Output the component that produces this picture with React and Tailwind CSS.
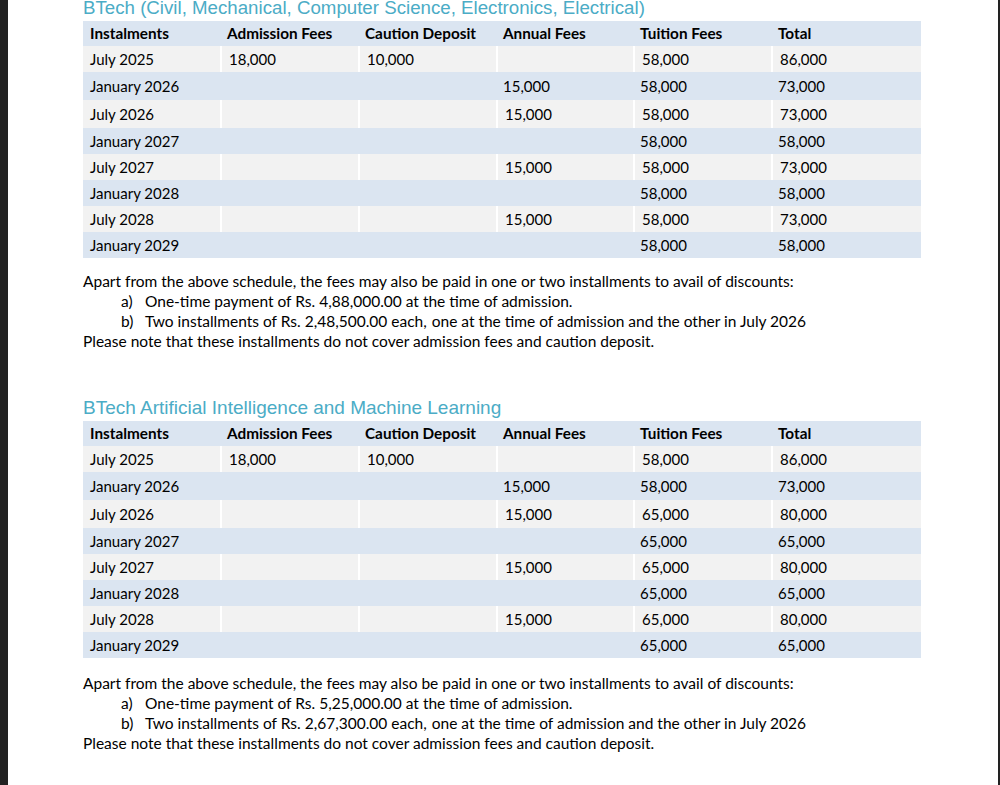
import React from "react";

const heads = ["Instalments", "Admission Fees", "Caution Deposit", "Annual Fees", "Tuition Fees", "Total"];
const heights = ["h-[26px]", "h-[28px]", "h-[28px]", "h-[26px]", "h-[26px]", "h-[26px]", "h-[26px]", "h-[26px]"];

const t1 = [
  ["July 2025", "18,000", "10,000", "", "58,000", "86,000"],
  ["January 2026", "", "", "15,000", "58,000", "73,000"],
  ["July 2026", "", "", "15,000", "58,000", "73,000"],
  ["January 2027", "", "", "", "58,000", "58,000"],
  ["July 2027", "", "", "15,000", "58,000", "73,000"],
  ["January 2028", "", "", "", "58,000", "58,000"],
  ["July 2028", "", "", "15,000", "58,000", "73,000"],
  ["January 2029", "", "", "", "58,000", "58,000"],
];
const t2 = [
  ["July 2025", "18,000", "10,000", "", "58,000", "86,000"],
  ["January 2026", "", "", "15,000", "58,000", "73,000"],
  ["July 2026", "", "", "15,000", "65,000", "80,000"],
  ["January 2027", "", "", "", "65,000", "65,000"],
  ["July 2027", "", "", "15,000", "65,000", "80,000"],
  ["January 2028", "", "", "", "65,000", "65,000"],
  ["July 2028", "", "", "15,000", "65,000", "80,000"],
  ["January 2029", "", "", "", "65,000", "65,000"],
];

const cols = "grid grid-cols-[137px_138px_138px_137px_138px_150px]";

function Table({ rows }) {
  return (
    <div className="w-[838px] text-[15px] text-black">
      <div className={`${cols} h-[25px] bg-[#dbe5f1] font-bold items-center text-[15.3px]`}>
        {heads.map((h) => (
          <div key={h} className="pl-[7px]">{h}</div>
        ))}
      </div>
      {rows.map((r, i) => {
        const gray = i % 2 === 0;
        return (
          <div key={i} className={`${cols} ${heights[i]} ${gray ? "bg-[#f2f2f2]" : "bg-[#dbe5f1]"}`}>
            {r.map((c, j) => (
              <div
                key={j}
                className={`pl-[7px] flex items-center ${gray && j > 0 ? "border-l-2 border-white pl-[5px]" : ""}`}
              >
                {c}
              </div>
            ))}
          </div>
        );
      })}
    </div>
  );
}

function Notes({ one, two, className }) {
  return (
    <div className={`text-[15.5px] leading-[20px] text-black ${className}`}>
      <div>Apart from the above schedule, the fees may also be paid in one or two installments to avail of discounts:</div>
      <div className="flex pl-[38px]">
        <span className="w-[24px]">a)</span>
        <span>One-time payment of Rs. {one} at the time of admission.</span>
      </div>
      <div className="flex pl-[38px]">
        <span className="w-[24px]">b)</span>
        <span>
          Two installments of Rs. {two} each, <span className="ml-[1px]">one at the time of admission and the other in July 2026</span>
        </span>
      </div>
      <div>Please note that these installments do not cover admission fees and caution deposit.</div>
    </div>
  );
}

function Section({ title, rows, one, two, className, titleSize, notesGap }) {
  return (
    <div className={className}>
      <div className={`h-[25px] flex items-center ${titleSize} text-[#4bacc6] [font-family:'Liberation_Sans',Arial,sans-serif]`}>
        <span>{title}</span>
      </div>
      <Table rows={rows} />
      <Notes one={one} two={two} className={notesGap} />
    </div>
  );
}

export default function App() {
  return (
    <div className="flex h-[785px] w-[1000px] overflow-hidden bg-white [font-family:Lato,'Liberation_Sans',sans-serif]">
      <div className="w-[8px] bg-[#222222]" />
      <div className="flex-1 pl-[75px]">
        <Section
          className="-mt-[4px]"
          titleSize="text-[18.7px]"
          notesGap="mt-[13px]"
          title="BTech (Civil, Mechanical, Computer Science, Electronics, Electrical)"
          rows={t1}
          one="4,88,000.00"
          two="2,48,500.00"
        />
        <Section
          className="mt-[45px]"
          titleSize="text-[19px]"
          notesGap="mt-[15px]"
          title="BTech Artificial Intelligence and Machine Learning"
          rows={t2}
          one="5,25,000.00"
          two="2,67,300.00"
        />
      </div>
      <div className="w-[2px] bg-[#222222]" />
    </div>
  );
}
